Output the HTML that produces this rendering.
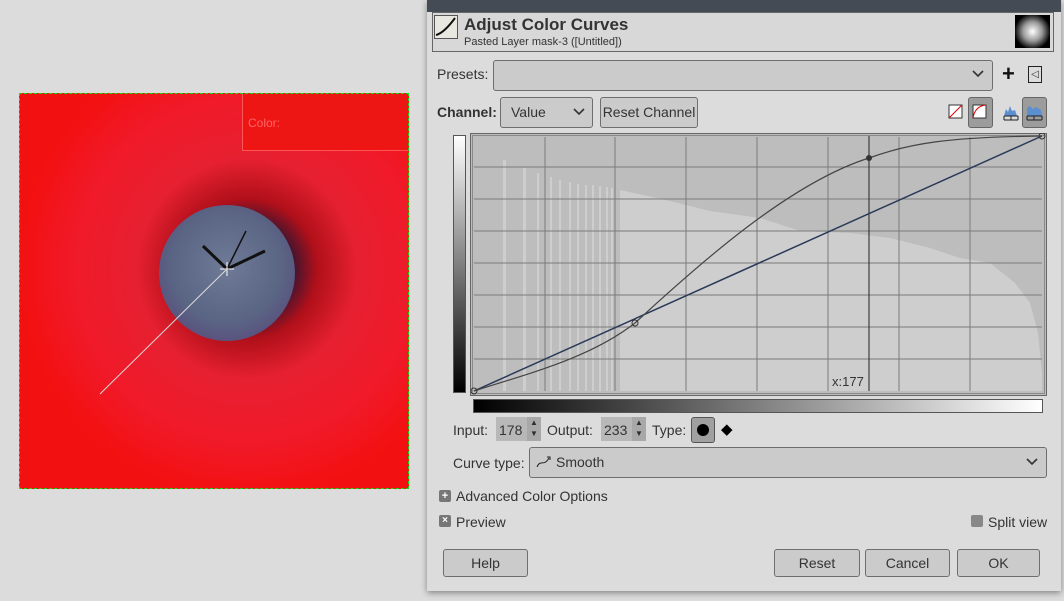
<!DOCTYPE html>
<html><head><meta charset="utf-8"><style>
*{margin:0;padding:0;box-sizing:border-box}
body{width:1064px;height:601px;background:#dcdcdc;font-family:"Liberation Sans",sans-serif;position:relative;overflow:hidden;color:#2e2e2e}
.abs{position:absolute}
.btn{position:absolute;border:1px solid #6e6e6e;border-radius:3px;background:#cbcbcb;font-size:14px;text-align:center;color:#333}
.lbl{position:absolute;font-size:14px;color:#333}
</style></head><body>
<!-- canvas -->
<div class="abs" style="left:19px;top:93px;width:390px;height:396px;border:1px dashed #11dd11;overflow:hidden;background:radial-gradient(circle at 227px 175px,#2a1020 0,#3a1530 45px,#b0101a 70px,#e62030 110px,#f01a2a 170px,#f31010 230px)">
 <div class="abs" style="left:222px;top:0;width:170px;height:57px;border-left:1px solid #f55;border-bottom:1px solid #f55;background:#ee1515"></div>
 <div class="abs" style="left:228px;top:22px;font-size:12px;color:#f66">Color:</div>
 <div class="abs" style="left:139px;top:111px;width:136px;height:136px;border-radius:50%;background:radial-gradient(circle at 50% 45%,#6e7a96 0,#5a6584 55%,#5a3a78 100%)"></div>
 <svg class="abs" style="left:0;top:0" width="390" height="396">
  <line x1="207" y1="175" x2="80" y2="300" stroke="#ddd" stroke-width="1"/>
  <line x1="207" y1="175" x2="183" y2="152" stroke="#111" stroke-width="3"/>
  <line x1="207" y1="175" x2="245" y2="157" stroke="#111" stroke-width="3"/>
  <line x1="207" y1="175" x2="226" y2="137" stroke="#111" stroke-width="1.5"/>
  <line x1="200" y1="175" x2="214" y2="175" stroke="#fff"/><line x1="207" y1="168" x2="207" y2="182" stroke="#fff"/>
 </svg>
</div>
<!-- dialog -->
<div class="abs" style="left:427px;top:0;width:634px;height:591px;background:#dcdcdc;box-shadow:0 2px 6px rgba(0,0,0,.4)"></div>
<div class="abs" style="left:427px;top:0;width:634px;height:12px;background:#454b54"></div>
<div class="abs" style="left:432px;top:12px;width:622px;height:40px;border:1px solid #666;background:#d8d8d8"></div>
<svg class="abs" style="left:434px;top:15px" width="24" height="24"><rect x="0.5" y="0.5" width="23" height="23" fill="#e8e8e0" stroke="#555"/><path d="M2 20 Q10 18 21 3" stroke="#111" stroke-width="2" fill="none"/></svg>
<div class="abs" style="left:464px;top:15px;font-size:17px;font-weight:bold;color:#333">Adjust Color Curves</div>
<div class="abs" style="left:464px;top:36px;font-size:11px;color:#333">Pasted Layer mask-3 ([Untitled])</div>
<div class="abs" style="left:1015px;top:15px;width:35px;height:33px;background:radial-gradient(circle at 50% 50%,#fff 0,#999 40%,#000 75%)"></div>
<div class="lbl" style="left:437px;top:66px">Presets:</div>
<div class="btn" style="left:493px;top:60px;width:500px;height:31px"></div>
<svg class="abs" style="left:971px;top:69px" width="14" height="10"><path d="M2 2 L7 7 L12 2" stroke="#333" stroke-width="1.6" fill="none"/></svg>
<div class="abs" style="left:1002px;top:61px;font-size:22px;font-weight:bold;color:#111">+</div>
<div class="abs" style="left:1028px;top:66px;width:14px;height:17px;border:1px solid #222;font-size:10px;text-align:center;line-height:15px">◁</div>
<div class="lbl" style="left:437px;top:104px;font-weight:bold">Channel:</div>
<div class="btn" style="left:500px;top:97px;width:93px;height:31px;text-align:left;padding:6px 10px">Value</div>
<svg class="abs" style="left:572px;top:107px" width="14" height="10"><path d="M2 2 L7 7 L12 2" stroke="#333" stroke-width="1.6" fill="none"/></svg>
<div class="btn" style="left:600px;top:97px;width:98px;height:31px;line-height:29px">Reset Channel</div>
<svg class="abs" style="left:948px;top:104px" width="16" height="16"><rect x="1" y="1" width="13" height="13" fill="#fff" stroke="#333"/><line x1="1" y1="14" x2="14" y2="1" stroke="#d00"/></svg>
<div class="abs" style="left:968px;top:97px;width:25px;height:31px;background:#9c9c9c;border:1px solid #666;border-radius:3px"></div>
<svg class="abs" style="left:972px;top:104px" width="16" height="16"><rect x="1" y="1" width="13" height="13" fill="#fff" stroke="#333"/><path d="M1 14 Q3 2 14 1" stroke="#d00" fill="none"/></svg>
<svg class="abs" style="left:1003px;top:103px" width="16" height="18"><path d="M1 13 L3 6 L5 9 L7 3 L9 8 L12 7 L14 13Z" fill="#5b8fd0"/><path d="M1 13 H15 M1 13 V17 M8 13 V17 M15 13 V17 M1 17 H15" stroke="#222"/></svg>
<div class="abs" style="left:1022px;top:97px;width:25px;height:31px;background:#9c9c9c;border:1px solid #666;border-radius:3px"></div>
<svg class="abs" style="left:1026px;top:103px" width="17" height="18"><path d="M1 13 L1 5 L4 3 L7 6 L10 4 L15 7 L16 13Z" fill="#5b8fd0"/><path d="M1 13 H16 M1 13 V17 M8 13 V17 M16 13 V17 M1 17 H16" stroke="#222"/></svg>
<!-- vertical gradient -->
<div class="abs" style="left:453px;top:135px;width:13px;height:258px;border:1px solid #555;background:linear-gradient(#fff,#000)"></div>
<!-- graph -->
<svg class="abs" style="left:470px;top:133px" width="577" height="263">
 <rect x="0.5" y="0.5" width="576" height="262" fill="#bdbdbd" stroke="#666"/>
 <rect x="2.5" y="2.5" width="572" height="258" fill="none" stroke="#555" stroke-dasharray="1,1"/>
 <g fill="#cecece">
  <rect x="33" y="27" width="3" height="231"/><rect x="53" y="35" width="3" height="223"/><rect x="67" y="40" width="2" height="218"/>
  <rect x="80" y="44" width="2" height="214"/><rect x="89" y="47" width="2" height="211"/><rect x="99" y="49" width="2" height="209"/>
  <rect x="107" y="51" width="2" height="207"/><rect x="115" y="52" width="2" height="206"/><rect x="122" y="52" width="2" height="206"/>
  <rect x="129" y="53" width="2" height="205"/><rect x="136" y="54" width="2" height="204"/><rect x="141" y="55" width="2" height="203"/>
  <polygon points="150,57 200,68 240,78 290,85 330,98 380,100 420,105 460,115 490,125 520,130 545,150 560,170 568,200 572,240 572,258 150,258"/>
 </g>
 <g stroke="#7a7a7a" stroke-width="1">
  <line x1="75" y1="4" x2="75" y2="258"/><line x1="145" y1="4" x2="145" y2="258"/><line x1="216" y1="4" x2="216" y2="258"/><line x1="287" y1="4" x2="287" y2="258"/><line x1="358" y1="4" x2="358" y2="258"/><line x1="429" y1="4" x2="429" y2="258"/><line x1="500" y1="4" x2="500" y2="258"/>
  <line x1="4" y1="34" x2="572" y2="34"/><line x1="4" y1="66" x2="572" y2="66"/><line x1="4" y1="98" x2="572" y2="98"/><line x1="4" y1="130" x2="572" y2="130"/><line x1="4" y1="162" x2="572" y2="162"/><line x1="4" y1="194" x2="572" y2="194"/><line x1="4" y1="226" x2="572" y2="226"/>
 </g>
 <line x1="399" y1="3" x2="399" y2="258" stroke="#222"/>
 <line x1="4" y1="258" x2="572" y2="3" stroke="#2a3a58" stroke-width="1.5"/>
 <path d="M4 258 C60 240 120 225 165 190 C230 130 320 50 399 25 C440 10 480 4 572 3" stroke="#444" stroke-width="1.2" fill="none"/>
 <circle cx="4" cy="258" r="3" fill="none" stroke="#333"/><circle cx="165" cy="190" r="3" fill="none" stroke="#333"/><circle cx="399" cy="25" r="3" fill="#333"/><circle cx="572" cy="3" r="3" fill="none" stroke="#333"/>
 <text x="362" y="253" font-family="Liberation Sans" font-size="13" fill="#333">x:177</text>
</svg>
<div class="abs" style="left:473px;top:399px;width:570px;height:14px;border:1px solid #555;background:linear-gradient(90deg,#000,#fff)"></div>
<div class="lbl" style="left:453px;top:422px">Input:</div>
<div class="abs" style="left:496px;top:417px;width:45px;height:24px;background:#b8b8b8"></div>
<div class="lbl" style="left:499px;top:422px">178</div>
<div class="abs" style="left:527px;top:417px;width:14px;height:24px;background:#a8a8a8;font-size:8px;text-align:center;line-height:11px">▲<br>▼</div>
<div class="lbl" style="left:547px;top:422px">Output:</div>
<div class="abs" style="left:601px;top:417px;width:45px;height:24px;background:#b8b8b8"></div>
<div class="lbl" style="left:604px;top:422px">233</div>
<div class="abs" style="left:632px;top:417px;width:14px;height:24px;background:#a8a8a8;font-size:8px;text-align:center;line-height:11px">▲<br>▼</div>
<div class="lbl" style="left:652px;top:422px">Type:</div>
<div class="abs" style="left:691px;top:417px;width:24px;height:26px;background:#a0a0a0;border:1px solid #555;border-radius:3px"></div>
<div class="abs" style="left:697px;top:424px;width:12px;height:12px;border-radius:50%;background:#000"></div>
<div class="abs" style="left:721px;top:420px;font-size:15px;color:#000">◆</div>
<div class="lbl" style="left:453px;top:455px">Curve type:</div>
<div class="btn" style="left:529px;top:447px;width:518px;height:31px;text-align:left;padding:6px 26px">Smooth</div>
<svg class="abs" style="left:536px;top:455px" width="16" height="14"><path d="M1 12 C4 4 8 12 13 3 M11 2 L14 2 L14 5" stroke="#222" fill="none"/></svg>
<svg class="abs" style="left:1025px;top:457px" width="14" height="10"><path d="M2 2 L7 7 L12 2" stroke="#333" stroke-width="1.6" fill="none"/></svg>
<div class="abs" style="left:439px;top:490px;width:12px;height:12px;background:#777;border-radius:2px;color:#fff;font-size:11px;line-height:12px;text-align:center;font-weight:bold">+</div>
<div class="lbl" style="left:456px;top:488px">Advanced Color Options</div>
<div class="abs" style="left:439px;top:515px;width:12px;height:12px;background:#777;border-radius:2px;color:#fff;font-size:10px;line-height:12px;text-align:center;font-weight:bold">×</div>
<div class="lbl" style="left:456px;top:514px">Preview</div>
<div class="abs" style="left:971px;top:515px;width:12px;height:12px;background:#888;border-radius:2px"></div>
<div class="lbl" style="left:988px;top:514px">Split view</div>
<div class="btn" style="left:443px;top:549px;width:85px;height:28px;line-height:26px">Help</div>
<div class="btn" style="left:774px;top:549px;width:86px;height:28px;line-height:26px">Reset</div>
<div class="btn" style="left:865px;top:549px;width:85px;height:28px;line-height:26px">Cancel</div>
<div class="btn" style="left:957px;top:549px;width:83px;height:28px;line-height:26px">OK</div>
</body></html>
